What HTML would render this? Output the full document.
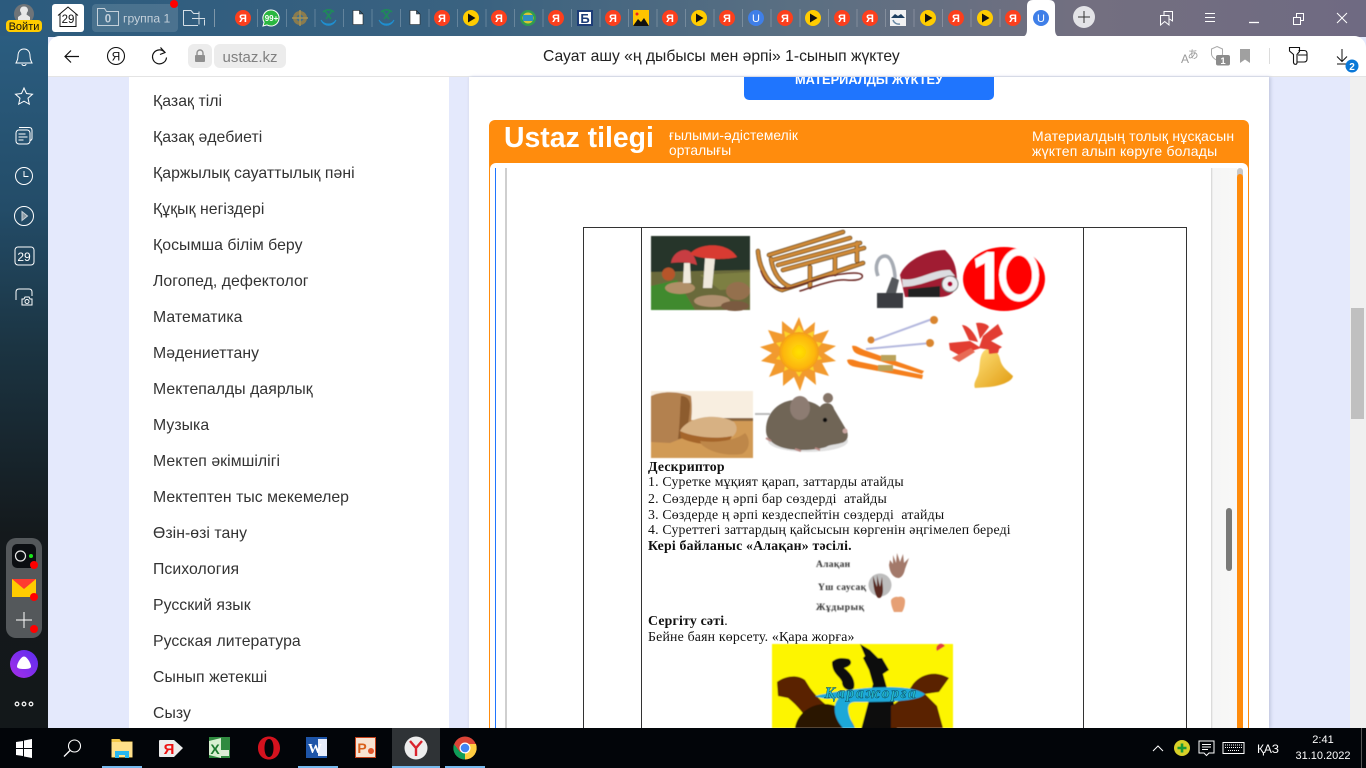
<!DOCTYPE html>
<html lang="kk"><head><meta charset="utf-8"><title>Сауат ашу</title>
<style>
html,body{margin:0;padding:0;width:1366px;height:768px;overflow:hidden;background:#e4e9fc;font-family:"Liberation Sans","DejaVu Sans",sans-serif}
div,span{position:absolute;white-space:nowrap}
.m{left:153px;font-size:15.8px;line-height:18px;color:#333;letter-spacing:.05px}
.t{left:648px;font:13.8px/16px "Liberation Serif",serif;color:#111;letter-spacing:.2px}
svg{position:absolute;left:0;top:0}
</style></head><body>
<!-- chrome backgrounds -->
<div style="left:0;top:0;width:1366px;height:37px;background:linear-gradient(90deg,#2c5b7e 0,#3a6280 35%,#5a6f82 58%,#736f80 80%,#6f6a82 100%)"></div>
<div style="left:0;top:36px;width:48px;height:692px;background:linear-gradient(180deg,#2b5d80 0,#234c68 25%,#1b3442 45%,#14191c 72%,#13181a 100%)"></div>
<!-- page -->
<div style="left:48px;top:36px;width:1318px;height:692px;background:#e4e9fc;border-top-left-radius:12px;border-top-right-radius:12px;overflow:hidden">
<div style="left:0;top:0;width:1318px;height:40px;background:#fff;border-bottom:1px solid #e4e4e4"></div>
</div>
<div style="left:129px;top:77px;width:320px;height:651px;background:#fff"></div>
<div style="left:469px;top:77px;width:800px;height:651px;background:#fff;box-shadow:2px 0 3px #c5cbe2,-1px 0 2px #dde1f2"></div>
<div style="left:1350px;top:77px;width:16px;height:651px;background:#f0f0f0"></div>
<div style="left:1351px;top:308px;width:13px;height:111px;background:#c0c0c0"></div>
<!-- menu -->
<div class="m" style="top:93px">Қазақ тілі</div>
<div class="m" style="top:129px">Қазақ әдебиеті</div>
<div class="m" style="top:165px">Қаржылық сауаттылық пәні</div>
<div class="m" style="top:201px">Құқық негіздері</div>
<div class="m" style="top:237px">Қосымша білім беру</div>
<div class="m" style="top:273px">Логопед, дефектолог</div>
<div class="m" style="top:309px">Математика</div>
<div class="m" style="top:345px">Мәдениеттану</div>
<div class="m" style="top:381px">Мектепалды даярлық</div>
<div class="m" style="top:417px">Музыка</div>
<div class="m" style="top:453px">Мектеп әкімшілігі</div>
<div class="m" style="top:489px">Мектептен тыс мекемелер</div>
<div class="m" style="top:525px">Өзін-өзі тану</div>
<div class="m" style="top:561px">Психология</div>
<div class="m" style="top:597px">Русский язык</div>
<div class="m" style="top:633px">Русская литература</div>
<div class="m" style="top:669px">Сынып жетекші</div>
<div class="m" style="top:705px">Сызу</div>
<!-- button -->
<div style="left:744px;top:77px;width:250px;height:23px;background:#1f75fe;border-radius:0 0 5px 5px;overflow:hidden">
<span style="left:0;width:250px;top:-5px;text-align:center;font-size:12.8px;line-height:16px;font-weight:bold;color:#fff">МАТЕРИАЛДЫ ЖҮКТЕУ</span></div>
<!-- orange frame -->
<div style="left:489px;top:120px;width:760px;height:608px;background:#ff8c0d;border-radius:6px 6px 0 0"></div>
<div style="left:504px;top:122px;font-size:28.4px;line-height:32px;font-weight:bold;color:#fff">Ustaz tilegi</div>
<div style="left:669px;top:129px;font-size:13.8px;line-height:14.5px;color:#fff;white-space:pre-line;letter-spacing:.05px">ғылыми-әдістемелік
орталығы</div>
<div style="left:1032px;top:129px;font-size:14px;line-height:14.5px;color:#fff;white-space:pre-line;letter-spacing:.2px">Материалдың толық нұсқасын
жүктеп алып көруге болады</div>
<div style="left:490px;top:163px;width:758px;height:565px;background:#fff;border-radius:6px 6px 0 0"></div>
<div style="left:495px;top:168px;width:1px;height:560px;background:#1f75fe"></div>
<div style="left:505px;top:168px;width:2px;height:560px;background:#cfcfcf"></div>
<div style="left:1211px;top:168px;width:26px;height:560px;background:linear-gradient(90deg,#d2d2d2 0,#f6f6f6 2px,#f8f8f7 100%)"></div>
<div style="left:1237px;top:168px;width:6px;height:8px;background:#c8c8c8;border-radius:3px 3px 0 0"></div>
<div style="left:1237px;top:174px;width:6px;height:554px;background:#ff8c0d;border-radius:3px 3px 0 0"></div>
<div style="left:1226px;top:508px;width:6px;height:63px;background:#7a7a78;border-radius:3px"></div>
<!-- table -->
<div style="left:583px;top:227px;width:602px;height:501px;border:1px solid #333;border-bottom:0"></div>
<div style="left:641px;top:227px;width:1px;height:501px;background:#333"></div>
<div style="left:1083px;top:227px;width:1px;height:501px;background:#333"></div>
<div class="t" style="top:459px;font-weight:bold">Дескриптор</div>
<div class="t" style="top:474px">1. Суретке мұқият қарап, заттарды атайды</div>
<div class="t" style="top:491px">2. Сөздерде ң әрпі бар сөздерді&nbsp; атайды</div>
<div class="t" style="top:507px">3. Сөздерде ң әрпі кездеспейтін сөздерді&nbsp; атайды</div>
<div class="t" style="top:522px">4. Суреттегі заттардың қайсысын көргенін әңгімелеп береді</div>
<div class="t" style="top:538px;font-weight:bold">Кері байланыс «Алақан» тәсілі.</div>
<div class="t" style="top:613px"><b>Сергіту сәті</b>.</div>
<div class="t" style="top:629px">Бейне баян көрсету. «Қара жорға»</div>

<svg width="1366" height="768" viewBox="0 0 1366 768" xmlns="http://www.w3.org/2000/svg">
<defs><filter id="b" x="-5%" y="-5%" width="110%" height="110%"><feGaussianBlur stdDeviation=".5"/></filter>
<linearGradient id="al" x1="0" y1="1" x2="1" y2="0"><stop offset="0" stop-color="#a82ee8"/><stop offset="1" stop-color="#5a2df0"/></linearGradient>
<radialGradient id="sn"><stop offset="0" stop-color="#ffe100"/><stop offset=".8" stop-color="#fdb60f"/><stop offset="1" stop-color="#f39a16"/></radialGradient>
<linearGradient id="bl" x1="0" y1="0" x2="1" y2="1"><stop offset="0" stop-color="#ffe27a"/><stop offset="1" stop-color="#e09a10"/></linearGradient>
</defs>

<!-- TAB STRIP -->
<circle cx="24" cy="14" r="10" fill="#6f7478"/><path d="M24 6.500a3.600 3.600 0 0 1 3 6l-.5 2 3.500 2.500v3H18v-3l3.500-2.500-.5-2a3.600 3.600 0 0 1 3-6z" fill="#e8e8e8"/>
<rect x="6" y="20" width="36" height="12" rx="4" fill="#ffcc00"/><text x="24" y="30" text-anchor="middle" font-size="11" font-family="Liberation Sans" fill="#111">Войти</text>
<rect x="52" y="4" width="32" height="28" rx="3" fill="#fff"/><path d="M58 15.500 68 7l10 8.500M60 14v12.500h16V14" fill="none" stroke="#111" stroke-width="1"/><text x="68" y="23" text-anchor="middle" font-size="11.500" font-family="Liberation Sans" fill="#111">29</text>
<rect x="92" y="4" width="86" height="28" rx="4" fill="#fff" fill-opacity=".13"/>
<path d="M97.500 25.500V8.500h7l2 3h12v14z" fill="none" stroke="#c4d0da" stroke-width="1"/><text x="108" y="22.500" text-anchor="middle" font-size="11.500" font-weight="bold" font-family="Liberation Sans" fill="#c4d0da">0</text>
<text x="123" y="22.500" font-size="12.200" font-family="Liberation Sans" fill="#c4d0da">группа 1</text>
<circle cx="174" cy="4" r="4" fill="#f00"/>
<path d="M183.500 25.500V10.500h7.500l2.500 3h5M183.500 25.500H198M204.500 19.500v6M199 11.500v13M192 18.500h13" fill="none" stroke="#d5dfe6" stroke-width="1"/>
<path d="M214.500 9v18" stroke="#7e97a9"/>
<g stroke="#fff" stroke-opacity=".22"><path d="M257.500 9v18M286.500 9v18M315 9v18M343.500 9v18M372 9v18M400.500 9v18M429 9v18M457.500 9v18M486 9v18M514.500 9v18M543 9v18M571.500 9v18M600 9v18M628.500 9v18M657 9v18M685.500 9v18M714 9v18M742.500 9v18M771 9v18M800 9v18M828.500 9v18M857 9v18M885.500 9v18M914 9v18M942.500 9v18M971 9v18M1000 9v18"/></g>
<g font-family="Liberation Sans" font-size="11" font-weight="bold" text-anchor="middle" fill="#fff">
<circle cx="243" cy="18" r="8" fill="#fc3f1d"/><text x="243" y="22">Я</text>
<circle cx="442" cy="18" r="8" fill="#fc3f1d"/><text x="442" y="22">Я</text>
<circle cx="499" cy="18" r="8" fill="#fc3f1d"/><text x="499" y="22">Я</text>
<circle cx="556" cy="18" r="8" fill="#fc3f1d"/><text x="556" y="22">Я</text>
<circle cx="613" cy="18" r="8" fill="#fc3f1d"/><text x="613" y="22">Я</text>
<circle cx="670" cy="18" r="8" fill="#fc3f1d"/><text x="670" y="22">Я</text>
<circle cx="727" cy="18" r="8" fill="#fc3f1d"/><text x="727" y="22">Я</text>
<circle cx="785" cy="18" r="8" fill="#fc3f1d"/><text x="785" y="22">Я</text>
<circle cx="842" cy="18" r="8" fill="#fc3f1d"/><text x="842" y="22">Я</text>
<circle cx="870" cy="18" r="8" fill="#fc3f1d"/><text x="870" y="22">Я</text>
<circle cx="956" cy="18" r="8" fill="#fc3f1d"/><text x="956" y="22">Я</text>
<circle cx="1013" cy="18" r="8" fill="#fc3f1d"/><text x="1013" y="22">Я</text>
</g>
<!-- whatsapp -->
<path d="M271 10a8 8 0 1 1-4 14.900l-4 1.100 1.100-3.800A8 8 0 0 1 271 10z" fill="#2bb741" stroke="#fff" stroke-width="1"/><text x="271.500" y="21" text-anchor="middle" font-size="8" font-weight="bold" font-family="Liberation Sans" fill="#fff">99+</text>
<!-- emblem -->
<circle cx="300" cy="18" r="7" fill="#8a7b4e"/><circle cx="300" cy="18" r="3.500" fill="#3f6f8e"/><path d="M300 10v16M292 18h16" stroke="#a59255" stroke-width="1.500"/>
<!-- globes -->
<path d="M321 20a8 8 0 0 0 15 0 9 9 0 0 1-15 0z" fill="#1f8fd0" stroke="#1f8fd0"/><path d="M323 12a8 8 0 0 1 11 0M325 11l6 8M332 11l-6 8" fill="none" stroke="#1f8a5a" stroke-width="1.600"/>
<path d="M379 20a8 8 0 0 0 15 0 9 9 0 0 1-15 0z" fill="#1f8fd0" stroke="#1f8fd0"/><path d="M381 12a8 8 0 0 1 11 0M383 11l6 8M390 11l-6 8" fill="none" stroke="#1f8a5a" stroke-width="1.600"/>
<!-- docs -->
<path d="M353 10.500h6.500l3.500 3.500v10.500h-10zM359.500 10.500V14h3.500" fill="#fff" stroke="#222" stroke-width=".6"/>
<path d="M410 10.500h6.500l3.500 3.500v10.500h-10zM416.500 10.500V14h3.500" fill="#fff" stroke="#222" stroke-width=".6"/>
<!-- play -->
<g fill="#fc0"><circle cx="471" cy="18" r="8"/><circle cx="699" cy="18" r="8"/><circle cx="813" cy="18" r="8"/><circle cx="928" cy="18" r="8"/><circle cx="985" cy="18" r="8"/></g>
<g fill="#111"><path d="M468 13.500v9l7.500-4.500zM696 13.500v9l7.500-4.500zM810 13.500v9l7.500-4.500zM925 13.500v9l7.500-4.500zM982 13.500v9l7.500-4.500z"/></g>
<!-- emblem 2 -->
<circle cx="528" cy="18" r="8" fill="#2f9d4f"/><circle cx="528" cy="18" r="5.500" fill="#d5c535"/><rect x="523" y="15" width="10" height="6" fill="#2d8fbf"/>
<!-- Б -->
<rect x="577" y="10" width="16" height="16" fill="#1d3d78"/><rect x="579" y="12" width="12" height="12" fill="#fff"/><text x="585" y="23" text-anchor="middle" font-size="13" font-weight="bold" font-family="Liberation Sans" fill="#1d3d78">Б</text>
<!-- image -->
<rect x="633" y="10" width="16" height="16" fill="#ffc400"/><path d="M633 26l5-7 3 3 3-4 5 8z" fill="#111"/><circle cx="637" cy="14" r="1.500" fill="#e22"/>
<!-- U -->
<circle cx="756" cy="18" r="8" fill="#3f7fe8"/><text x="756" y="22" text-anchor="middle" font-size="11" font-family="Liberation Sans" fill="#fff">U</text>
<!-- dolphin -->
<rect x="890" y="10" width="16" height="16" fill="#f2f2f2"/><path d="M891 18l4-4 3 2 3-2 4 4z" fill="#1f3f5f"/><path d="M893 20a6 6 0 0 0 7 4" fill="none" stroke="#6a8aa5" stroke-width="1.500"/>
<!-- active tab -->
<path d="M1020 37c5 0 7-2 7-8V6c0-4 2-6 6-6h16c4 0 6 2 6 6v23c0 6 2 8 7 8z" fill="#fff"/>
<circle cx="1041" cy="18" r="8" fill="#3f7fe8"/><text x="1041" y="22" text-anchor="middle" font-size="11" font-family="Liberation Sans" fill="#fff">U</text>
<circle cx="1084" cy="17" r="11" fill="#e3e3e7"/><path d="M1084 11v12M1078 17h12" stroke="#333" stroke-width="1"/>
<!-- window controls -->
<g fill="none" stroke="#fff" stroke-width="1">
<path d="M1160.500 15.500h8.500v9.500l-4.300-3.500-4.200 3.500zM1164 15v-3.500h8.500v9.500l-3-2"/>
<path d="M1205 13.500h10M1205 17.500h10M1205 21.500h10"/>
<path d="M1249 22.500h10" stroke-width="1.300"/>
<path d="M1293.500 17.500h7v7h-7zM1296.500 17v-3.500h7v7h-3"/>
<path d="M1337 13l10 10M1347 13l-10 10"/>
</g>

<!-- TOOLBAR icons -->
<path d="M65 56.500h14M71 50.500l-6 6 6 6" fill="none" stroke="#111" stroke-width="1.200"/>
<circle cx="116" cy="56" r="8.500" fill="none" stroke="#111" stroke-width="1.100"/><text x="116" y="60.500" text-anchor="middle" font-size="12" font-family="Liberation Sans" fill="#111">Я</text>
<path d="M165 52.500a7 7 0 1 0 1.500 5" fill="none" stroke="#111" stroke-width="1.200"/><path d="M160.500 47.500l4.500 5-5 2" fill="none" stroke="#111" stroke-width="1.200"/>
<rect x="188" y="44" width="24" height="24" rx="6" fill="#ececec"/><rect x="195" y="55" width="10" height="7" rx="1" fill="#8f8f8f"/><path d="M197 55v-2a3 3 0 0 1 6 0v2" fill="none" stroke="#8f8f8f" stroke-width="1.400"/>
<rect x="214" y="44" width="72" height="24" rx="6" fill="#ececec"/>
<text x="222.500" y="62" font-size="15" font-family="Liberation Sans" fill="#808080">ustaz.kz</text>
<text x="1181" y="63" font-size="12" font-family="Liberation Sans" fill="#9a9a9a">A</text><text x="1187.500" y="58" font-size="11" font-family="Noto Sans CJK JP" fill="#9a9a9a">あ</text>
<path d="M1217 46.500l5.500 2.500v5c0 3-3 5-5.500 6.500-2.500-1.500-5.500-3.500-5.500-6.500v-5z" fill="none" stroke="#aaa"/><rect x="1216" y="55" width="14" height="10.500" rx="2" fill="#8c8c8c"/><text x="1223" y="64" text-anchor="middle" font-size="9.500" font-weight="bold" font-family="Liberation Sans" fill="#fff">1</text>
<path d="M1240 49h10v14l-5-3.500-5 3.500z" fill="#a0a0a0"/>
<path d="M1269.500 48v16" stroke="#dcdcdc"/>
<path d="M1289.500 47.500h10v4l-2.500 3v8c0 2.500-3 2.500-3.500 0v-8l-4-3.500zM1298.500 50.500h5.500c2 0 3 1 3 3v5.500c0 2-1 3-3 3h-6.500M1298 55h9" fill="none" stroke="#111" stroke-width="1.100"/>
<path d="M1342 49v12M1337 56.500l5 5 5-5M1337 64h9" fill="none" stroke="#111" stroke-width="1"/>
<circle cx="1352" cy="66" r="6.500" fill="#0a78d7"/><text x="1352" y="70" text-anchor="middle" font-size="10" font-weight="bold" font-family="Liberation Sans" fill="#fff">2</text>

<!-- SIDEBAR icons -->
<g fill="none" stroke="#fff" stroke-width="1">
<path d="M24 49c-4 0-6 3-6 7 0 4-1 5-2 7h16c-1-2-2-3-2-7 0-4-2-7-6-7zM22 64c0 2 4 2 4 0"/>
<path d="M24 88l2.500 5.500 6 .700-4.500 4 1.300 6-5.300-3-5.300 3 1.300-6-4.500-4 6-.700z"/>
<rect x="16" y="130" width="14" height="14" rx="3"/><path d="M19 127.500h10c2 0 3 1 3 3v8c0 1-.5 1.500-1.500 2"/><path d="M18.500 134h7M18.500 137h9M18.500 140h5"/>
<circle cx="24" cy="176" r="8.500"/><path d="M24 171v5.500h4.500"/>
<circle cx="24" cy="216" r="9.500"/>
<rect x="15" y="247" width="19" height="18" rx="3"/>
<path d="M16 300v-8c0-2 1-3 3-3h10c2 0 3 1 3 3v4M22 305h10v-6h-2l-1-2h-4l-1 2h-2z"/><circle cx="27" cy="301.500" r="2"/>
</g>
<path d="M22 211.500v9l5.500-4.500z" fill="#8b9aa3" stroke="#c9d2d8"/>
<text x="24" y="261" text-anchor="middle" font-size="12" font-family="Liberation Sans" fill="#fff">29</text>
<rect x="6" y="538" width="36" height="100" rx="10" fill="#54585b"/>
<rect x="12" y="544" width="24" height="24" rx="5" fill="#0b0e12"/><circle cx="20.500" cy="556" r="5" fill="none" stroke="#e8e8e8" stroke-width="1.200"/><circle cx="31" cy="556" r="2" fill="#19e619"/>
<path d="M12 579h24v18H12z" fill="#ffcc00"/><path d="M12 579h24l-12 10z" fill="#ff3b30"/>
<path d="M24 612v16M16 620h16" stroke="#fff" stroke-width="1"/>
<circle cx="34" cy="565" r="4" fill="#f00"/><circle cx="34" cy="597" r="4" fill="#f00"/><circle cx="34" cy="629" r="4" fill="#f00"/>
<circle cx="24" cy="664" r="14" fill="url(#al)"/><path d="M24 656.500c3 0 7 7 7 10 0 2-3 2.500-7 2.500s-7-.5-7-2.500c0-3 4-10 7-10z" fill="#fff"/>
<g fill="none" stroke="#eee" stroke-width="1.300"><circle cx="17" cy="704" r="1.800"/><circle cx="24" cy="704" r="1.800"/><circle cx="31" cy="704" r="1.800"/></g>

<!-- DOCUMENT IMAGES -->
<g filter="url(#b)">
<!-- mushroom -->
<rect x="651" y="236" width="99" height="74" fill="#26352b"/>
<path d="M651 272l99-2v40h-99z" fill="#6b6a3a"/><path d="M651 286l26-6 18 30h-44z" fill="#3f8a2e"/><path d="M700 275l50-3v16l-30 2z" fill="#7d7f42"/>
<ellipse cx="680" cy="288" rx="15" ry="6" fill="#b08f68"/><ellipse cx="738" cy="291" rx="12" ry="9" fill="#94704e"/><ellipse cx="712" cy="301" rx="18" ry="6" fill="#b09070"/><ellipse cx="735" cy="306" rx="14" ry="5" fill="#7a5a40"/>
<path d="M684 263h6l1 20h-8zM705 258h10l-3 30h-9z" fill="#efe9dc"/>
<path d="M671 263c1-8 8-13 14-13 6 0 10 6 12 15-8-3-18-3-26-2z" fill="#c83c42"/>
<path d="M690 254c7-10 36-14 47 3-10 3-36 3-47-3z" fill="#d83a32"/>
<circle cx="668.500" cy="274" r="6.500" fill="#b6552c"/>
<!-- sled -->
<g fill="none" stroke-linecap="round">
<g stroke="#5c3a17" stroke-width="4.500"><path d="M758 251c1 18 12 36 24 39l81-27"/><path d="M771 259c2 14 10 25 20 28l62-21"/><path d="M769 255l74-23M773 260l77-22M778 265l82-22M783 270l81-22M810 267v20M835 258v16M857 243v18"/></g>
<g stroke="#cf8a38" stroke-width="3"><path d="M758 251c1 18 12 36 24 39l81-27"/><path d="M771 259c2 14 10 25 20 28l62-21"/><path d="M769 255l74-23M773 260l77-22M778 265l82-22M783 270l81-22M810 267v20M835 258v16M857 243v18"/></g>
<path d="M761 271c5 14 15 19 28 17 14-3 25-9 40-12 12-2 30-5 33-1 2 4-5 6-16 5-12-1-30 6-46 11" stroke="#6c2a25" stroke-width="1.500"/>
</g>
<!-- vacuum -->
<path d="M878 276c-4-10 0-20 7-20 6 0 9 10 10 20l-2 18" fill="none" stroke="#a6abb3" stroke-width="3.500"/>
<rect x="877" y="293" width="26" height="15" fill="#3b3e42"/><path d="M886 293l6-16 7 3-3 13z" fill="#55585c"/>
<path d="M900 275c5-13 25-25 45-25 8 8 12 15 12 35-2 10-12 12-17 12l-35 0z" fill="#a01f33"/>
<path d="M902 279c15 3 30-10 48-9l5 6c-15-1-30 10-52 11z" fill="#dcdce0"/><path d="M908 289l32-3 0 11-32 0z" fill="#222"/>
<circle cx="950" cy="284" r="8" fill="#ececf0" stroke="#777"/><circle cx="950" cy="284" r="2.500" fill="#a03"/>
<!-- ten -->
<ellipse cx="1004" cy="279" rx="41" ry="32" fill="#f00"/>
<path d="M975 259l12-7h7v47h-9v-36l-9 5z" fill="#fff"/><ellipse cx="1019" cy="275" rx="16.500" ry="23" fill="none" stroke="#fff" stroke-width="7"/>
<!-- sun -->
<path d="M799 317l5 14 11-9-1 13 15-5-7 13 14 3-12 7 12 8-14 2 7 13-14-4 1 13-11-9-5 15-6-14-11 9 0-14-14 5 6-13-14-3 11-8-12-6 14-4-6-13 14 4 0-13 11 9z" fill="#f29a2e"/>
<path d="M799 325l6 10 9-4-2 10 10 2-7 8 7 8-10 2 2 10-9-4-6 10-6-10-9 4 2-10-10-2 7-8-7-8 10-2-2-10 9 4z" fill="#fcd42a"/>
<circle cx="799" cy="352" r="20" fill="url(#sn)"/>
<!-- skis -->
<path d="M872 341l63-23M866 349l65-6" stroke="#b4b8de" stroke-width="2"/>
<circle cx="934" cy="320" r="4" fill="#d9852f"/><circle cx="930" cy="343" r="4" fill="#d9852f"/><circle cx="871" cy="340" r="3.500" fill="#d9852f"/>
<path d="M852 346c1 6 3 7 8 9l62 19 2-3-60-21c-5-2-8-5-12-4z" fill="#f57f1a"/><path d="M847 360c1 5 4 6 9 7l66 12 1-4-62-13c-5-1-10-4-14-2z" fill="#f57f1a"/>
<rect x="881" y="355" width="15" height="6" fill="#b9a25a"/><rect x="878" y="365" width="15" height="6" fill="#b9a25a"/>
<!-- bell -->
<path d="M985 350c8-3 13 1 15 9 2 9 8 12 13 17-1 6-14 10-24 11l-14 1c-2-4 1-8 3-13 3-9 0-19 7-25z" fill="url(#bl)"/>
<path d="M962 325c6 0 13 8 16 17l-9-2zM976 323c5-1 12 1 13 4l-9 12zM983 336l15-12 5 10-12 7 11 6-6 4-17-3zM949 343l21-2 11 7-22 7-9-5zM988 345l12 1-2 7-9 1z" fill="#e23c30"/>
<path d="M952 358l19-10 4 4-16 10z" fill="#e86a55"/>
<!-- bread -->
<rect x="651" y="391" width="102" height="67" fill="#f8eee0"/><rect x="651" y="420" width="102" height="38" fill="#d19a55"/><rect x="700" y="418" width="53" height="3" fill="#8a6640"/>
<path d="M651 396c12-6 30-4 40 0 2 14 0 32-3 40l-18 7-19-1z" fill="#b3814f"/><path d="M681 396c6 0 9 4 9 10-1 15-3 26-6 32l-6 1c2-14 2-32 3-43z" fill="#8d5b2e"/>
<path d="M680 431c7-14 36-19 54-9 5 6 2 12-2 15-15 3-40 3-52-6z" fill="#d7b183"/><path d="M680 431c15 7 40 8 52 5l-4 8c-15 2-35 0-47-6z" fill="#a5652a"/><path d="M700 441c15 2 35 0 45-8 5 5 6 16-3 21-15 2-30-1-40-9z" fill="#be874a"/>
<!-- mouse -->
<ellipse cx="808" cy="441" rx="40" ry="11" fill="#e0e0e0"/>
<path d="M766 430c0-18 14-30 30-30 10 0 18 2 24 7 3-5 12-6 14 2l13 22c2 6 0 11-6 12-6 2-10 1-15 4-12 4-46 6-56-7-3-3-4-6-4-10z" fill="#6f6557"/>
<ellipse cx="800" cy="408" rx="10" ry="12" fill="#8d7c72"/><ellipse cx="828" cy="398" rx="5" ry="5" fill="#857467"/><circle cx="825" cy="420" r="2.200" fill="#111"/><circle cx="845" cy="431" r="2.500" fill="#c9a5a0"/>
<path d="M755 414h15" stroke="#bbb" stroke-width="2"/>
<path d="M766 438l5 3M795 449l6 2M815 448l5 2" stroke="#b98b85" stroke-width="2"/>
<!-- hands -->
<text x="816" y="567" font-size="9.500" font-weight="bold" letter-spacing=".3" font-family="Liberation Serif" fill="#333">Алақан</text>
<text x="818" y="590" font-size="9.500" font-weight="bold" letter-spacing=".4" font-family="Liberation Serif" fill="#333">Үш саусақ</text>
<text x="816" y="610" font-size="9.500" font-weight="bold" letter-spacing=".6" font-family="Liberation Serif" fill="#333">Жұдырық</text>
<path d="M889 565l1-5 3 4 0-9 3 8 1-10 3 9 3-8 1 9 5-5-4 11c-1 5-3 8-6 9-5 0-9-4-10-13z" fill="#a3796a"/>
<circle cx="880" cy="585" r="11.500" fill="#bdbdbd"/><path d="M873 576l4 11 0-12 3 12 2-10 1 12c0 7-2 9-4 9-3 0-6-9-6-22z" fill="#5a2a20"/>
<path d="M891 601c0-3 5-5 7-4 3-1 7 0 7 4 0 4-1 8-3 11h-8c-2-4-3-8-3-11z" fill="#e6a074"/>
<!-- Kara zhorga -->
<rect x="772" y="644" width="181" height="84" fill="#fdf500"/>
<path d="M860 644l10 6 8 8 4 0 7 12-6 4 4 14 6 8 4 34h-36l8-30 4-16-4-14-6-12 2-2z" fill="#111"/>
<path d="M832 662c5-5 12-4 17-3 5 4 0 8-5 9 6 4 12 12 10 20-3 4-12 2-12-6-2-6-10-8-10-20z" fill="#111"/>
<path d="M777 682c8-6 20-8 28-2l5 8c6 8 12 14 18 18l-6 22h-10c-6-12-14-22-24-30l-10-2z" fill="#5a2005"/>
<path d="M949 678c-14-8-28-4-36 6-6 10-14 18-22 22v22h52l-6-22-12-12 14-2z" fill="#5a2005"/>
<path d="M795 728c2-14 15-24 30-24 14 0 24 10 30 24z" fill="#2a1505"/>
<path d="M815 696c20-5 90-16 110-2-6 8-42 8-70 8-12 0-6 16 0 26h-12c-8-8-12-22-4-30-8 1-18 1-24-2z" fill="#1aa8d8"/>
<path d="M945 646a4.500 4.500 0 1 0-8 5z" fill="#e23c3c"/>
</g>
<text x="871" y="698" text-anchor="middle" font-size="16" font-style="italic" font-weight="bold" letter-spacing="1.500" font-family="Liberation Serif" fill="#25b8c8" stroke="#0a3d55" stroke-width=".4">Қаражорға</text>
</svg>

<!-- TASKBAR -->
<div style="left:0;top:728px;width:1366px;height:40px;background:#020509"></div>
<div style="left:392px;top:728px;width:48px;height:40px;background:#2f3336"></div>
<div style="left:102px;top:766px;width:40px;height:2px;background:#76b9ed"></div>
<div style="left:298px;top:766px;width:40px;height:2px;background:#76b9ed"></div>
<div style="left:392px;top:766px;width:48px;height:2px;background:#76b9ed"></div>
<div style="left:445px;top:766px;width:40px;height:2px;background:#76b9ed"></div>
<svg width="1366" height="768" viewBox="0 0 1366 768" xmlns="http://www.w3.org/2000/svg">
<path d="M16 742l7-1v7h-7zM24 740.500l8-1.500v9h-8zM16 749h7v7l-7-1zM24 749h8v9l-8-1.500z" fill="#fff"/>
<circle cx="74.500" cy="746" r="6" fill="none" stroke="#fff" stroke-width="1.100"/><path d="M70 750.500l-6 6" stroke="#fff" stroke-width="1.300"/>
<path d="M111.500 739h8l2 2.500h11v16h-21z" fill="#f4c84a"/><rect x="111.500" y="742" width="21" height="15" fill="#ffe08a"/><path d="M115 758v-7h14v7h-4v-3h-6v3z" fill="#29b6ee"/>
<path d="M160 740h14l9 8-9 9h-14a1 1 0 0 1-1-1v-15a1 1 0 0 1 1-1z" fill="#ececec"/><text x="169" y="754" text-anchor="middle" font-size="15" font-weight="bold" font-family="Liberation Sans" fill="#e11">Я</text>
<rect x="209" y="737" width="21" height="21" fill="#2f8a3f"/><path d="M209 741l12-3v20l-12-3z" fill="#d8f0d0"/><text x="215" y="754" text-anchor="middle" font-size="14" font-weight="bold" font-family="Liberation Sans" fill="#1d7a2f">X</text><path d="M221 750l8 0v6h-8z" fill="#dcecd5"/>
<path fill-rule="evenodd" d="M269 736.500c6.500 0 11 5 11 11.500s-4.500 11.500-11 11.500-11-5-11-11.500 4.500-11.500 11-11.500zm0 2.500c-3 0-4.500 4-4.500 9s1.500 9 4.500 9 4.500-4 4.500-9-1.500-9-4.500-9z" fill="#d4121e"/>
<rect x="306" y="737" width="21" height="21" fill="#1e55a8"/><rect x="318" y="739" width="9" height="17" fill="#e8eefb"/><text x="315" y="753" text-anchor="middle" font-size="14" font-weight="bold" font-family="Liberation Serif" fill="#fff">W</text>
<rect x="355" y="737" width="21" height="21" fill="#c4411a"/><rect x="356" y="738" width="19" height="19" fill="#f7e3d2"/><text x="362" y="753" text-anchor="middle" font-size="14" font-weight="bold" font-family="Liberation Sans" fill="#d9601a">P</text><circle cx="371" cy="751" r="3" fill="#e0552a"/>
<circle cx="416" cy="748" r="11.500" fill="#ededed"/><path d="M410 741l6 7 6-7M416 748v8" fill="none" stroke="#d9232d" stroke-width="2.400"/>
<circle cx="465" cy="748" r="11.500" fill="#db4437"/><path d="M465 759.500a11.500 11.500 0 0 0 11-15.500h-11z" fill="#ffcd40"/><path d="M465 759.500a11.500 11.500 0 0 1-11-15.500l6 8 5 0z" fill="#0f9d58"/><circle cx="465" cy="748" r="5.500" fill="#fff"/><circle cx="465" cy="748" r="4.300" fill="#4285f4"/>
<path d="M1153 751l5-5 5 5" fill="none" stroke="#fff" stroke-width="1"/>
<circle cx="1182" cy="748" r="8" fill="#d8d028"/><path d="M1182 743.500v9M1177.500 748h9" stroke="#1b9a36" stroke-width="2.600"/>
<path d="M1199 741h15v12h-5l-2.500 2.500-2.500-2.500h-5zM1202 744.500h9M1202 747h9M1202 749.500h6" fill="none" stroke="#fff" stroke-width="1"/>
<rect x="1223" y="742.500" width="21" height="11" fill="none" stroke="#fff"/><path d="M1225 745h17M1225 747.500h17M1228 750.500h11" stroke="#fff" stroke-dasharray="1 1"/>
<text x="1268" y="753" text-anchor="middle" font-size="12" font-family="Liberation Sans" fill="#fff">ҚАЗ</text>
<text x="1323" y="743" text-anchor="middle" font-size="11" font-family="Liberation Sans" fill="#fff">2:41</text>
<text x="1323" y="759" text-anchor="middle" font-size="11" font-family="Liberation Sans" fill="#fff">31.10.2022</text>
<path d="M1361.500 728v40" stroke="#555"/>
</svg>
<div style="left:543px;top:48px;font-size:15.7px;line-height:18px;color:#222">Сауат ашу «ң дыбысы мен әрпі» 1-сынып жүктеу</div>
</body></html>
